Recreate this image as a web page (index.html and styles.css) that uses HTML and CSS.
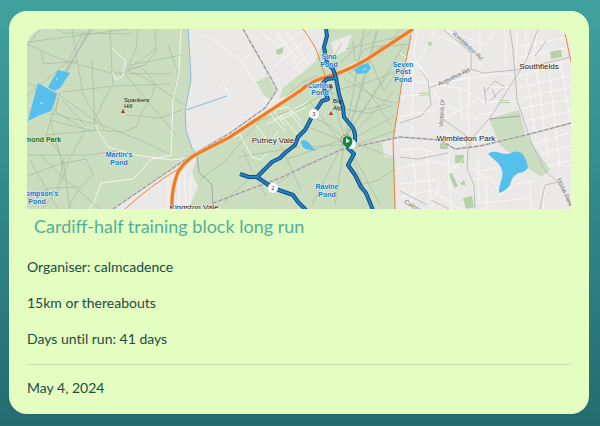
FILE: index.html
```
<!DOCTYPE html>
<html lang="en">
<head>
<meta charset="utf-8">
<meta name="viewport" content="width=device-width, initial-scale=1">
<title>Cardiff-half training block long run</title>
<link rel="stylesheet" href="styles.css">
</head>
<body>
<article class="card">
<svg class="map" viewBox="27 29 544 180" role="img" aria-label="Route map">
  <rect class="land" x="27" y="29" width="544" height="180"/>
  <!-- parks -->
  <g class="park">
    <path d="M27 29H188L190 60 191 80 185 110 186 130 192 148 196 155 113 209H27Z"/>
    <path d="M197 157 300 92 330 77 363 61 413 29 402 80 394 140 396 209H188L198 187 192 172Z"/>
    <path d="M279 99 283 88 315 62 322 45 326 29H413L362 59Z"/>
    <path d="M256 82 268 76 276 92 272 98 263 97Z"/>
    <path d="M489 119 519 110 525 133 550 170 541 177 527 167 500 145Z"/>
    <path class="grove" d="M550 51 561 49 562 57 551 59ZM455 155H464V163H455ZM463 198 472 196 474 207 466 209ZM440 143H448V149H440ZM276 50 283 47 283 53 277 55ZM419 93 430 92 430 95 419 96ZM499 100H510V103H499ZM448 174 452 173 458 186 455 188ZM427 42 431 41 432 45 428 46ZM460 184 464 180 466 186Z"/>
  </g>
  <circle class="land" cx="178" cy="186" r="13"/>
  <path class="land" d="M113 209 192 157 197 160 180 174 172 182 170 209Z"/>
  <path class="land" d="M382 140 394 137V159L384 157ZM331 42 352 34 346 51 334 56Z"/>
  <!-- park tracks -->
  <path class="track" d="M27 44 60 59 110 73 170 74M40 29 27 46M92 29 62 76 50 87M72 29 83 95 104 129M84 31 68 62 28 95M27 42 130 29M56 29 64 33 130 34M41 52 44 64 78 61M110 29 112 72 113 84 103 102 95 120M138 29 136 50 128 66 120 76M155 29 156 52 145 65 125 71M92 60 95 131M62 92 115 86 170 84M55 92 100 124 142 141 172 155M56 94 51 120 46 135 63 158 70 209M60 93 54 114 95 124M58 98 56 112 83 128M62 100 86 126M50 120 92 131M45 135 98 130 124 132 136 127 143 110 152 96 155 83 140 66 127 70 145 78 183 104M27 155 90 155 120 150M27 176 60 164 86 159 93 174 76 193 68 209M40 154 60 175 100 209M30 160 58 209M63 160 58 190 42 209M50 120 60 155 64 177M85 130 70 158 61 184M27 199 50 188 80 187M48 89 28 84M28 112 40 109 53 85M128 68 140 61 155 49M130 65 182 55M126 75 176 135M182 110 160 118 126 115M168 45 178 72 173 100"/>
  <path class="track" d="M200 180 225 161 260 120 300 108 330 90M243 150 252 171 266 196M238 157 300 147M280 145 292 170 301 190M250 178 224 202M269 190 302 166 350 147 394 131M304 147 342 145 394 116M308 127 345 142 393 92M309 100 341 143 391 70M330 89 345 139 404 45M345 139 364 30M345 139 380 205M345 139 370 203M345 139 335 205M345 139 312 205M345 139 287 159M315 118 331 126 344 139M345 139 394 158M335 106 357 112 387 104M337 90 366 83 397 71M344 79 381 100 397 103M349 74 380 47 410 44M348 71 373 98 391 125M356 64 364 49 385 45M368 55 384 91 401 65M347 110 370 113 393 105M360 185 379 180 394 169M339 77 333 58 342 43M341 63 371 31M346 49 402 36M355 61 353 41M309 86 320 86 336 95 345 112M285 97 303 82 316 76"/>
  <path class="horse" d="M377 31 357 104 347 135M64 76 90 29"/>
  <!-- minor streets -->
  <path class="street" d="M181 29 179 72 173 100 171 155M172 155 152 159 133 179 101 183 94 202 89 209M95 125 108 147 135 155 172 160 195 157M112 48 126 61 123 76 116 80 112 72M205 34 241 61 268 102M241 61 250 55M222 80 230 96M277 31 289 49 301 73M260 31 279 47 302 31M276 65 303 42M275 35 300 60M286 31 309 65M290 72 314 49M261 96 273 110 285 126M280 120 306 107M269 112 285 132M266 125 309 101M255 124 270 143 279 130M238 131 252 157 261 160 267 153M239 135 229 139M270 111 288 107 301 121M289 111 303 130M280 115 300 137M168 174 168 209M184 170 186 205M179 176V207M191 177 190 204"/>
  <path class="street" d="M400 53 421 67 433 87 447 119M418 29 413 56 430 84M435 29 420 60 399 79M439 36 470 50 468 72M445 30 486 45 495 29M480 30 480 72M402 80 432 84 489 75M399 97 433 93M401 116 431 111 446 100M413 68 412 137M435 85 461 88 486 103M443 120 479 98M447 105 480 121M459 88 462 121M443 132 472 148 481 131M469 72 468 139M475 72 513 75M481 86 512 88M482 102 515 101M479 115 495 112M517 31 516 65M505 30 506 67M526 30 526 69M537 29 533 64M517 77 571 60M519 88 571 75M519 99 571 87M520 109 571 99M525 121 571 111M530 133 571 121M534 144 571 132M541 154 571 145M548 166 571 160M518 47 571 37M518 58 571 47M526 72 536 138M537 70 548 158M549 68 560 170M561 64 571 125M401 150 420 148 440 155M399 169 430 161 460 168M400 184 437 180M401 197 432 190 460 209M410 147 416 181 410 209M426 149 431 201M448 154 451 209M468 155 440 180 432 207M470 167 486 177 487 209M473 180 490 176 501 196M478 155 479 204M500 195 515 184 535 181M530 180 531 209M545 182 543 209M478 203 530 198M496 168 480 171"/>
  <path class="road" d="M420 70 428 80 431 105 421 116 400 123M430 88 471 69 483 73 516 70 571 57M443 29 471 53 471 69M538 29 526 61 490 118 471 139 469 149M443 119 465 135 468 150 467 168 474 185 475 209M510 29 513 49 517 100 531 142 545 171 558 182 571 206M558 182 545 185 540 209M535 56 546 41M400 191 427 205M431 200 449 209M400 157 418 159 448 153M484 86 486 103M484 93 495 81 505 87M490 101 503 88M492 89 496 98M391 40 400 30"/>
  <path class="stream" d="M188 29 190 60 191 80 185 110 186 130 192 148 197 155M186 110 227 96"/>
  <path class="water" d="M488 154Q491 151 497 152Q508 156 513 152Q520 150 523 155Q527 160 528 168Q524 173 518 173Q512 176 510 185Q506 191 499 193Q498 190 502 178Q504 170 498 163ZM38 83 57 94 51 111 40 115 28 121 31 109ZM48 87 58 70 70 73 60 88 54 91ZM354 70 361 65 368 63 371 68 367 73 357 74ZM301 142Q303 138 308 142L316 151 311 150Q302 150 301 142Z"/>
  <path class="lake-mark" d="M40 103h3M56 79h2M363 69h3"/>
  <!-- railways -->
  <path class="rail-bed" d="M113 209 192 155 230 133 265 108 277 90 272 80 243 29M213 203 280 178 340 150 400 137 440 140 455 149 480 146 530 134 571 123"/>
  <path class="rail" d="M113 209 192 155 230 133 265 108 277 90 272 80 243 29M213 203 280 178 340 150 400 137 440 140 455 149 480 146 530 134 571 123"/>
  <path class="boundary" d="M197 156 199 172 212 185 213 209M489 119 520 116"/>
  <!-- main roads -->
  <path class="minor-orange" d="M125 209Q150 186 178 169M303 29Q316 46 318 55L325 75M411 35 403 76 393 140 395 209M565 33 571 62"/>
  <path class="trunk-case" d="M172 209Q171 190 178 172Q184 162 195 155L230 137 300 91Q312 80 330 76Q355 68 375 54L413 29"/>
  <path class="trunk" d="M172 209Q171 190 178 172Q184 162 195 155L230 137 300 91Q312 80 330 76Q355 68 375 54L413 29"/>
  <!-- recorded route -->
  <g class="route">
    <path id="track" d="M326 29 327 36 324 47 327 63 333 69 336 78 339 94 343 107 344 117 353 128 355 134 355 141 348 148 354 154 348 165 355 175 361 187 366 193 373 210M336 78 327 79 323 83 325 92 328 99 322 101 313 115 305 130 298 137 295 145 285 153 280 158 272 162 257 177 249 177 240 174M257 177 273 188 293 195 298 202 306 210"/>
  </g>
  <g class="route-core"><use href="#track"/></g>
  <!-- place names -->
  <g class="water-name">
    <text x="119" y="157">Martin's</text><text x="119" y="165">Pond</text>
    <text x="42" y="196">ompson's</text><text x="37" y="204">Pond</text>
    <text x="329" y="59">Sino</text><text x="329" y="67">Pond</text>
    <text x="320" y="88">Curling</text><text x="320" y="95">Pond</text>
    <text x="403" y="67">Seven</text><text x="403" y="74">Post</text><text x="403" y="82">Pond</text>
    <text x="327" y="189">Ravine</text><text x="327" y="197">Pond</text>
  </g>
  <text class="park-name" x="43" y="142">mond Park</text>
  <g class="peak-name"><text x="124" y="102">Spankers</text><text x="124" y="108">Hill</text><text x="333" y="103">Big</text><text x="333" y="110">Alp</text></g>
  <path class="peak" d="M123 109 125 113H121ZM331 84 333 88H329ZM331 111 333 115H329Z"/>
  <g class="place"><text x="273" y="143">Putney Vale</text><text x="194" y="210">Kingston Vale</text><text x="539" y="69">Southfields</text><text x="466" y="141">Wimbledon Park</text></g>
  <g class="road-name">
    <text transform="translate(452 34) rotate(43)">Wimbledon Rd</text>
    <text transform="translate(439 86) rotate(-25)">Augustus Rd</text>
    <text transform="translate(443 127) rotate(-87)">Victoria Dr</text>
    <text transform="translate(557 179) rotate(66)">Home Park</text>
    <text transform="translate(404 203) rotate(30)">Calonne</text>
  </g>
  <g class="marker">
    <circle cx="314" cy="114" r="5"/><circle cx="273" cy="188" r="5"/><circle cx="351" cy="144" r="5"/>
    <text x="314" y="116">3</text><text x="273" y="190">2</text>
  </g>
  <circle class="finish" cx="346" cy="140" r="5"/>
  <path class="start" d="M348 149 343 144Q341 136 347 136Q354 137 352 144Z"/>
  <path class="play" d="M346 138 350 141 346 143Z"/>
</svg>
<h2 class="title">Cardiff-half training block long run</h2>
<div class="details">
  <p>Organiser: calmcadence</p>
  <p>15km or thereabouts</p>
  <p>Days until run: 41 days</p>
</div>
<hr class="divider">
<p class="date"><time datetime="2024-05-04">May 4, 2024</time></p>
</article>
</body>
</html>
```
FILE: styles.css
```
* { box-sizing: border-box; }
html { min-height: 100%; background: linear-gradient(#40a29f, #246b70); }
body {
  margin: 0;
  padding: 11px 11px 12px 9px;
  color: #1d4b46;
  font: 14px/20px Lato, sans-serif;
}
.card { padding: 18px 18px 16px; border-radius: 18px; background: #e4fdc1; }
.map { display: block; width: 100%; height: auto; border-radius: 18px 18px 0 0; }
.title {
  margin: 0 0 12px;
  padding: 0 7px 2px;
  color: #57ae96;
  font-size: 18px;
  font-weight: 400;
  line-height: 34px;
}
.details { display: grid; gap: 16px; font-variant-ligatures: none; }
p { margin: 0; }
.divider { height: 1px; margin: 15px 0 13px; border: 0; background: #c9dfaf; }

.map path { fill: none; stroke-linejoin: round; }
.map .land { fill: #ebe9e7; }
.map .park path { fill: #cbddbf; }
.map .park .grove { fill: #b5d0a5; }
.map .track { stroke: #a9b5a3; stroke-width: 1px; opacity: .65; }
.map .horse { stroke: #9dbcb6; stroke-width: 2px; opacity: .6; }
.map .street { stroke: #f9f9f5; stroke-width: 1px; opacity: .85; }
.map .road { stroke: #bdbdbc; stroke-width: 1px; }
.map .stream { stroke: #89bdd3; stroke-width: 1px; }
.map .water { fill: #55bfee; }
.map .lake-mark { stroke: #c5eafa; stroke-width: 1px; }
.map .rail-bed { stroke: #cfcecd; stroke-width: 2px; }
.map .rail { stroke: #8b8c8e; stroke-width: 1px; stroke-dasharray: 4 2; }
.map .boundary { stroke: #a1a6a5; stroke-width: 1px; }
.map .minor-orange { stroke: #ec8439; stroke-width: 1px; }
.map .trunk-case { stroke: #f8c48c; stroke-width: 4px; }
.map .trunk { stroke: #ed7b25; stroke-width: 3px; }
.map text { font-family: "Liberation Sans", sans-serif; font-size: 7px; }
.map .water-name text {
  fill: #1976c9;
  stroke: #e2f1f3;
  stroke-width: 1px;
  paint-order: stroke;
  font-weight: 700;
  text-anchor: middle;
}
.map .park-name {
  fill: #18712b;
  stroke: #dceace;
  stroke-width: 1px;
  paint-order: stroke;
  font-weight: 700;
  text-anchor: middle;
}
.map .peak-name text { fill: #202420; font-size: 6px; }
.map .peak { fill: #b53228; }
.map .place text {
  fill: #222;
  stroke: #f3f3ef;
  stroke-width: 1px;
  paint-order: stroke;
  font-size: 8px;
  text-anchor: middle;
}
.map .road-name text { fill: #777; font-size: 6px; }
.map .route { stroke: #124a84; stroke-width: 4px; }
.map .route-core { stroke: #2383c8; stroke-width: 2px; }
.map .marker circle { fill: #fff; }
.map .marker text { fill: #454545; font-size: 6px; text-anchor: middle; }
.map .finish { fill: #fff; stroke: #d66359; stroke-width: 1px; }
.map .start { fill: #168846; }
.map .play { fill: #fff; }
```
